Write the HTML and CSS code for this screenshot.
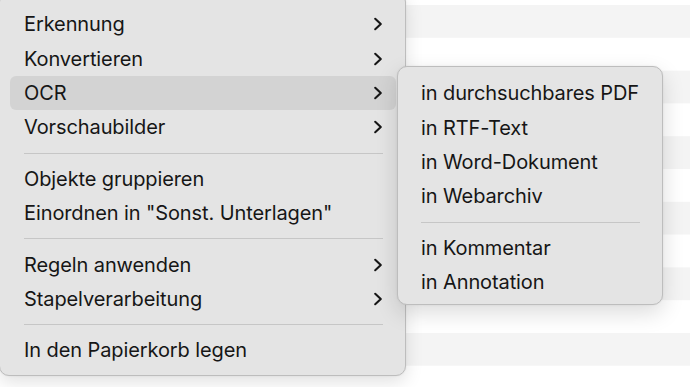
FILE: index.html
```html
<!DOCTYPE html>
<html lang="de">
<head>
<meta charset="utf-8">
<title>Kontextmenü</title>
<link rel="stylesheet" href="styles.css">
</head>
<body>
<div class="desk">
  <div class="menu main">
    <div class="item"><span>Erkennung</span><svg class="chev" viewBox="0 0 10 14"><path d="M2.2 1.8 L7.8 7 L2.2 12.2"/></svg></div>
    <div class="item"><span>Konvertieren</span><svg class="chev" viewBox="0 0 10 14"><path d="M2.2 1.8 L7.8 7 L2.2 12.2"/></svg></div>
    <div class="item active"><span>OCR</span><svg class="chev" viewBox="0 0 10 14"><path d="M2.2 1.8 L7.8 7 L2.2 12.2"/></svg></div>
    <div class="item"><span>Vorschaubilder</span><svg class="chev" viewBox="0 0 10 14"><path d="M2.2 1.8 L7.8 7 L2.2 12.2"/></svg></div>
    <div class="sep"></div>
    <div class="item"><span>Objekte gruppieren</span></div>
    <div class="item"><span>Einordnen in "Sonst. Unterlagen"</span></div>
    <div class="sep"></div>
    <div class="item"><span>Regeln anwenden</span><svg class="chev" viewBox="0 0 10 14"><path d="M2.2 1.8 L7.8 7 L2.2 12.2"/></svg></div>
    <div class="item"><span>Stapelverarbeitung</span><svg class="chev" viewBox="0 0 10 14"><path d="M2.2 1.8 L7.8 7 L2.2 12.2"/></svg></div>
    <div class="sep"></div>
    <div class="item"><span>In den Papierkorb legen</span></div>
  </div>
  <div class="menu sub">
    <div class="item"><span>in durchsuchbares PDF</span></div>
    <div class="item"><span>in RTF-Text</span></div>
    <div class="item"><span>in Word-Dokument</span></div>
    <div class="item"><span>in Webarchiv</span></div>
    <div class="sep"></div>
    <div class="item"><span>in Kommentar</span></div>
    <div class="item"><span>in Annotation</span></div>
  </div>
</div>
</body>
</html>
```
FILE: styles.css
```css
html, body {
  margin: 0;
  padding: 0;
  background: #ffffff;
}

.desk {
  position: relative;
  display: flex;
  align-items: flex-start;
  width: 690px;
  height: 387px;
  overflow: hidden;
  background-color: #ffffff;
  background-image: linear-gradient(#f4f4f4 0 50%, #ffffff 50% 100%);
  background-size: 100% 65.6px;
  background-position: 0 5px;
  font-family: Inter, "Noto Sans", "Liberation Sans", sans-serif;
  color: #161616;
}

.menu {
  background: #e4e4e4;
  border: 1px solid #bdbdbd;
  box-sizing: border-box;
  display: flex;
  flex-direction: column;
}

.main {
  width: 407px;
  margin-top: -8px;
  margin-left: -1px;
  padding: 14px 9px 7px 10px;
  border-radius: 10px;
  box-shadow: 0 6px 18px rgba(0, 0, 0, 0.12), 0 0 2px rgba(0, 0, 0, 0.08);
}

.sub {
  position: absolute;
  left: 397px;
  top: 66px;
  width: 266px;
  padding: 9px 9px 5px 9px;
  border-radius: 10px;
  box-shadow: 0 8px 22px rgba(0, 0, 0, 0.14), 0 0 2px rgba(0, 0, 0, 0.08);
}

.item {
  height: 34.4px;
  display: flex;
  align-items: center;
  justify-content: space-between;
  padding: 0 13px 0 14px;
  border-radius: 6px;
  font-size: 20px;
  letter-spacing: -0.1px;
  white-space: nowrap;
}

.sub .item {
  padding-left: 14px;
}

.item.active {
  background: #d3d3d3;
}

.chev {
  width: 10px;
  height: 14px;
  fill: none;
  stroke: #161616;
  stroke-width: 2.1;
  stroke-linecap: round;
  stroke-linejoin: round;
}

.sep {
  height: 1px;
  margin: 8px 13px 8px 14px;
  background: #c6c6c6;
}
```
